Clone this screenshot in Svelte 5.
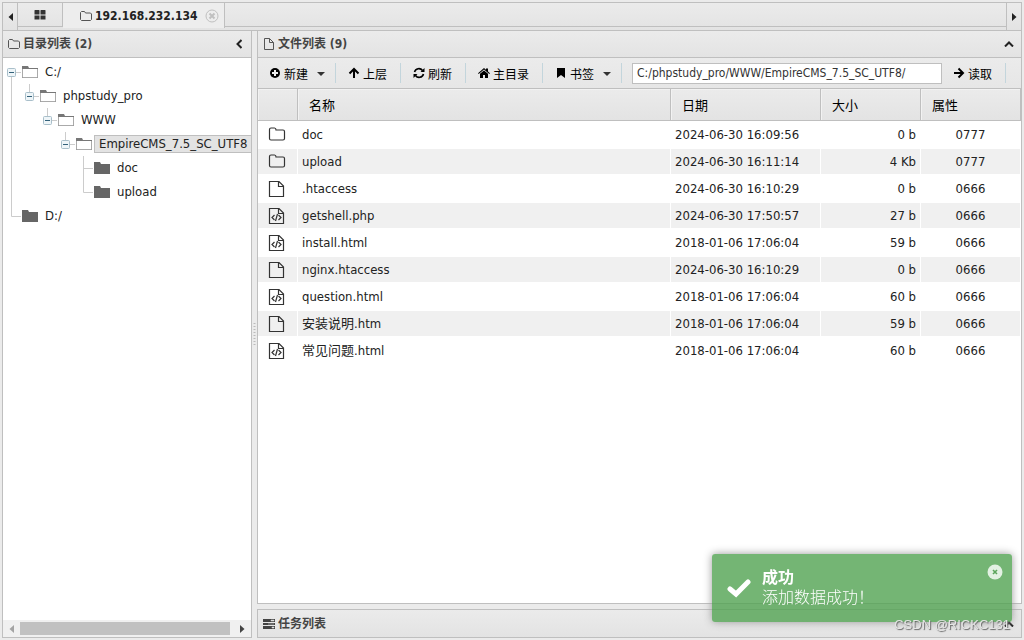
<script lang="ts">
  type Node = { name: string; cells: string[]; open: boolean; active?: boolean }

  const tree: Node[] = [
    { name: 'C:/', cells: ['minus-root'], open: true },
    { name: 'phpstudy_pro', cells: ['line', 'minus'], open: true },
    { name: 'WWW', cells: ['line', '', 'minus'], open: true },
    { name: 'EmpireCMS_7.5_SC_UTF8', cells: ['line', '', '', 'minus'], open: true, active: true },
    { name: 'doc', cells: ['line', '', '', '', 'tee'], open: false },
    { name: 'upload', cells: ['line', '', '', '', 'elbow'], open: false },
    { name: 'D:/', cells: ['elbow'], open: false },
  ]

  const files = [
    { type: 'folder', name: 'doc', date: '2024-06-30 16:09:56', size: '0 b', attr: '0777' },
    { type: 'folder', name: 'upload', date: '2024-06-30 16:11:14', size: '4 Kb', attr: '0777' },
    { type: 'file', name: '.htaccess', date: '2024-06-30 16:10:29', size: '0 b', attr: '0666' },
    { type: 'code', name: 'getshell.php', date: '2024-06-30 17:50:57', size: '27 b', attr: '0666' },
    { type: 'code', name: 'install.html', date: '2018-01-06 17:06:04', size: '59 b', attr: '0666' },
    { type: 'file', name: 'nginx.htaccess', date: '2024-06-30 16:10:29', size: '0 b', attr: '0666' },
    { type: 'code', name: 'question.html', date: '2018-01-06 17:06:04', size: '60 b', attr: '0666' },
    { type: 'file', name: '安装说明.htm', date: '2018-01-06 17:06:04', size: '59 b', attr: '0666' },
    { type: 'code', name: '常见问题.html', date: '2018-01-06 17:06:04', size: '60 b', attr: '0666' },
  ]

  let path = $state('C:/phpstudy_pro/WWW/EmpireCMS_7.5_SC_UTF8/')
  let showToast = $state(true)
</script>

{#snippet folderOutline()}
  <svg width="12" height="12" viewBox="0 0 12 12" fill="none" stroke="#555">
    <path d="M.5 9.5v-7l1-1h3l1 1.500h5l1 1v5.500l-1 1h-9z" />
  </svg>
{/snippet}

{#snippet arrow(dir: string)}
  <svg width="5" height="8" viewBox="0 0 5 8" fill="currentColor">
    <path d={dir === 'left' ? 'M5 0v8L.5 4z' : 'M0 0v8l4.500-4z'} />
  </svg>
{/snippet}

{#snippet caret()}
  <svg class="caret" width="8" height="4" viewBox="0 0 8 4"><path d="M0 0h8L4 4z" fill="#333" /></svg>
{/snippet}

{#snippet chevronUp()}
  <svg width="10" height="6" viewBox="0 0 10 6" fill="none" stroke="#222" stroke-width="2">
    <path d="M1 5.500l4-4 4 4" />
  </svg>
{/snippet}

<div class="app">
  <nav class="tabbar">
    <button class="scroll" aria-label="left">{@render arrow('left')}</button>
    <button class="tab home" aria-label="home">
      <svg width="12" height="10" viewBox="0 0 12 10" fill="#333">
        <path d="M1 0h4q.5 0 .5.5v4H.5v-4Q.5 0 1 0zM7 0h4q.5 0 .5.5v4h-5v-4Q6.500 0 7 0zM.5 5.500h5v4H.5zM6.500 5.500h5v4h-5z" />
      </svg>
    </button>
    <div class="tab active">
      <button class="tab-name">{@render folderOutline()}192.168.232.134</button>
      <button class="close" aria-label="close">
        <svg width="14" height="14" viewBox="0 0 14 14" fill="none" stroke="#c0c0c0">
          <circle cx="7" cy="7" r="6" />
          <path d="M4.500 4.500l5 5M9.500 4.500l-5 5" stroke-width="2" />
        </svg>
      </button>
    </div>
    <div class="tab-rest"></div>
    <button class="scroll right" aria-label="right">{@render arrow('right')}</button>
  </nav>

  <div class="main">
    <aside class="panel left">
      <header class="panel-head">
        {@render folderOutline()}
        <h2>目录列表 (2)</h2>
        <button class="collapse" aria-label="collapse">
          <svg width="6" height="10" viewBox="0 0 6 10" fill="none" stroke="#222" stroke-width="2">
            <path d="M5.500 1l-4 4 4 4" />
          </svg>
        </button>
      </header>
      <div class="tree">
        {#each tree as node}
          <div class="node">
            {#each node.cells as cell}
              <svg class="cell" width="18" height="24" viewBox="0 0 18 24" fill="none" stroke="#ccc">
                {#if cell === 'line'}
                  <path d="M8.500 0v24" />
                {:else if cell === 'tee'}
                  <path d="M8.500 0v24M8.500 12.500H18" />
                {:else if cell === 'elbow'}
                  <path d="M8.500 0v12.500H18" />
                {:else if cell}
                  <path d={cell === 'minus' ? 'M8.500 0v8M13 12.500h5' : 'M8.500 16v8M13 12.500h5'} />
                  <rect x="4.500" y="8.500" width="8" height="8" rx="1" fill="#eef5f8" stroke="#a9bfca" />
                  <path d="M6 12.500h5" stroke="#33617a" />
                {/if}
              </svg>
            {/each}
            <svg class="cell" width="18" height="24" viewBox="0 0 18 24">
              <path d="M1 6h6l1 2h9v10H1z" fill={node.open ? '#777' : '#666'} />
              {#if node.open}
                <path d="M2 9h14v8H2z" fill="#fff" />
                <path d="M1.500 9v8.500h15V9" fill="none" stroke="#aaa" />
              {/if}
            </svg>
            <a href="#{node.name}" class:active={node.active}>{node.name}</a>
          </div>
        {/each}
      </div>
      <div class="scrollbar">
        <span class="dim">{@render arrow('left')}</span>
        <div class="track"><div class="thumb"></div></div>
        <span>{@render arrow('right')}</span>
      </div>
    </aside>

    <div class="splitter">
      <svg width="3" height="24" viewBox="0 0 3 24"><path d="M1.500 0v24" stroke="#bbb" stroke-width="2" stroke-dasharray="1 2" /></svg>
    </div>

    <div class="right-side">
      <section class="panel files">
        <header class="panel-head">
          <svg width="12" height="12" viewBox="0 0 12 12" fill="none" stroke="#555">
            <path d="M1.500.5h5l4 4v7h-9zM6.500.5v4h4" />
          </svg>
          <h2>文件列表 (9)</h2>
          <button class="collapse" aria-label="collapse">{@render chevronUp()}</button>
        </header>

        <div class="toolbar">
          <button>
            <svg class="icon" viewBox="0 0 12 12"><circle cx="6" cy="6" r="5" /><path d="M6 3v6M3 6h6" stroke="#eee" stroke-width="2" /></svg>
            新建{@render caret()}
          </button>
          <button>
            <svg class="icon" viewBox="0 0 12 12"><path d="M6 11V2M1.500 6.500L6 2l4.500 4.500" fill="none" stroke="#000" stroke-width="2" /></svg>
            上层
          </button>
          <button>
            <svg class="icon" viewBox="0 0 12 12">
              <path d="M1.500 5A4.500 4.500 0 0 1 9.500 3.500M10.500 7A4.500 4.500 0 0 1 2.500 8.500" fill="none" stroke="#000" stroke-width="1.600" />
              <path d="M11.500 1v4h-4zM.5 11V7h4z" />
            </svg>
            刷新
          </button>
          <button>
            <svg class="icon" viewBox="0 0 12 12"><path d="M6 3.500l4 3.300V11H7V8H5v3H2V6.800zM0 6.200L6 1l2 1.700V1.500h2v3l2 1.700-.7.8L6 2.600.7 7z" /></svg>
            主目录
          </button>
          <button>
            <svg class="icon" viewBox="0 0 12 12"><path d="M2 1h8v10L6 8l-4 3z" /></svg>
            书签{@render caret()}
          </button>
          <input type="text" aria-label="path" bind:value={path} />
          <button class="read">
            <svg class="icon" viewBox="0 0 12 12"><path d="M1 6h9M5.500 1.500L10 6l-4.500 4.500" fill="none" stroke="#000" stroke-width="2" /></svg>
            读取
          </button>
        </div>

        <table>
          <thead>
            <tr>
              <th class="c-icon"></th>
              <th>名称</th>
              <th class="c-date">日期</th>
              <th class="c-size">大小</th>
              <th class="c-attr">属性</th>
            </tr>
          </thead>
          <tbody>
            {#each files as f}
              <tr>
                <td class="c-icon">
                  {#if f.type === 'folder'}
                    <svg width="18" height="18" viewBox="0 0 18 18" fill="none" stroke="#333" stroke-width="1.200">
                      <path d="M1.500 12.500v-9q0-1.500 1.500-1.500h3.500Q8 2 8 4h7q1.500 0 1.500 1.500v7q0 1.500-1.500 1.500H3q-1.500 0-1.500-1.500z" />
                    </svg>
                  {:else}
                    <svg width="18" height="18" viewBox="0 0 18 18" fill="none" stroke="#333" stroke-width="1.200">
                      <path d="M1.500 1.500h9.500L15.500 6v10.500h-14zM10.500 1.500v5h5" />
                      {#if f.type === 'code'}
                        <path d="M6.500 8L4 10.500 6.500 13M10.500 8l2.500 2.500-2.500 2.500M9.500 7l-2 7" />
                      {/if}
                    </svg>
                  {/if}
                </td>
                <td>{f.name}</td>
                <td class="c-date">{f.date}</td>
                <td class="c-size">{f.size}</td>
                <td class="c-attr">{f.attr}</td>
              </tr>
            {/each}
          </tbody>
        </table>
      </section>

      <section class="panel tasks">
        <header class="panel-head">
          <svg width="12" height="12" viewBox="0 0 12 12" fill="#444">
            <path d="M0 1h12v3H0zM0 5h12v2H0zM0 8h12v3H0z" />
            <path d="M8 2h3v1H8zM5 6h6M9 9h2v1H9z" fill="#ddd" stroke="#ddd" stroke-width=".5" />
          </svg>
          <h2>任务列表</h2>
          <button class="collapse" aria-label="expand">{@render chevronUp()}</button>
        </header>
      </section>
    </div>
  </div>

  {#if showToast}
    <div class="toast" role="status">
      <svg width="24" height="20" viewBox="0 0 24 20" fill="none" stroke="#fff" stroke-width="5" stroke-linecap="round">
        <path d="M3 11l6 5L21 4" />
      </svg>
      <div>
        <strong>成功</strong>
        <p>添加数据成功！</p>
      </div>
      <button aria-label="close" onclick={() => (showToast = false)}>
        <svg width="16" height="16" viewBox="0 0 16 16">
          <circle cx="8" cy="8" r="7.500" fill="#e3f1e3" />
          <path d="M6 6l4 4M10 6l-4 4" stroke="#5da65d" stroke-width="1.600" />
        </svg>
      </button>
    </div>
  {/if}
  <div class="watermark">CSDN @RICKC131</div>
</div>

<style>
  :global(body) {
    margin: 0;
    background: #ebebeb;
  }

  .app {
    box-sizing: border-box;
    height: 100vh;
    padding: 2px;
    display: flex;
    flex-direction: column;
    font-family: Tahoma, "DejaVu Sans Condensed", "Noto Sans CJK SC", sans-serif;
    font-size: 13px;
    color: #222;
  }

  svg {
    flex: none;
    display: block;
  }

  button {
    display: flex;
    align-items: center;
    justify-content: center;
    padding: 0;
    border: 0;
    background: none;
    font: inherit;
    color: inherit;
    cursor: pointer;
  }

  .tabbar {
    display: flex;
    height: 27px;
    border: 1px solid #bfbfbf;
    background: linear-gradient(#ebebeb, #e3e3e3);
  }

  .scroll {
    width: 14px;
    border-right: 1px solid #bfbfbf;
    color: #222;
    box-sizing: content-box;
  }

  .scroll.right {
    border-right: 0;
    border-left: 1px solid #bfbfbf;
  }

  .tab {
    height: 23px;
    border-right: 1px solid #bfbfbf;
  }

  .home {
    width: 45px;
    box-sizing: border-box;
    height: 24px;
    border-bottom: 1px solid #bfbfbf;
  }

  .tab.active {
    display: flex;
    align-items: center;
    gap: 8px;
    padding: 0 5px 0 17px;
    height: 25px;
    background: #ededed;
  }

  .tab-name {
    gap: 3px;
    font-size: 12px;
    font-weight: bold;
  }

  .tab-rest {
    flex: 1;
    height: 23px;
    border-bottom: 1px solid #bfbfbf;
  }

  .main {
    flex: 1;
    min-height: 0;
    display: flex;
  }

  .panel {
    border: 1px solid #bfbfbf;
    background: #fff;
  }

  .left {
    width: 248px;
    border-top: 0;
    display: flex;
    flex-direction: column;
    overflow: hidden;
  }

  .panel-head {
    display: flex;
    align-items: center;
    gap: 3px;
    height: 26px;
    padding: 0 5px;
    border-bottom: 1px solid #bfbfbf;
    background: linear-gradient(#ebebeb, #e3e3e3);
  }

  h2 {
    margin: 0;
    font-size: 12px;
    line-height: 16px;
    font-weight: bold;
    color: #444;
  }

  .collapse {
    width: 14px;
    height: 16px;
    margin-left: auto;
  }

  .tree {
    flex: 1;
    padding-top: 2px;
    overflow: hidden;
  }

  .node {
    display: flex;
    align-items: center;
    height: 24px;
    white-space: nowrap;
  }

  .node a {
    flex: 1 0 auto;
    margin-left: 1px;
    padding: 0 4px;
    border: 1px solid transparent;
    line-height: 16px;
    color: #222;
    text-decoration: none;
  }

  .node a.active {
    border-color: #bfbfbf;
    background: #e3e3e3;
  }

  .scrollbar {
    display: flex;
    align-items: center;
    height: 17px;
    background: #f0f0f0;
    color: #444;
  }

  .scrollbar span {
    width: 17px;
    display: flex;
    justify-content: center;
  }

  .scrollbar .dim {
    color: #a3a3a3;
  }

  .track {
    flex: 1;
  }

  .thumb {
    width: 98%;
    height: 13px;
    background: #c1c1c1;
  }

  .splitter {
    width: 5px;
    display: flex;
    align-items: center;
    justify-content: center;
  }

  .right-side {
    flex: 1;
    min-width: 0;
    display: flex;
    flex-direction: column;
    gap: 5px;
  }

  .files {
    flex: 1;
    border-top: 0;
    min-height: 0;
    overflow: hidden;
  }

  .tasks .panel-head {
    height: 27px;
    border-bottom: 0;
  }

  .toolbar {
    display: flex;
    align-items: center;
    height: 30px;
    border-bottom: 1px solid #bfbfbf;
    background: linear-gradient(#ebebeb, #e6e6e6);
    font-size: 12px;
    color: #000;
  }

  .toolbar button {
    gap: 3px;
    height: 20px;
    padding: 0 13px 0 12px;
    border-right: 1px solid #c3d5dc;
    white-space: nowrap;
  }

  .toolbar button:first-child {
    padding-left: 11px;
  }

  .caret {
    margin: 2px -3px 0 6px;
  }

  .icon {
    width: 12px;
    height: 12px;
  }

  .toolbar input {
    flex: 1;
    min-width: 0;
    height: 21px;
    box-sizing: border-box;
    margin-left: 10px;
    padding: 0 4px;
    border: 1px solid #bfbfbf;
    background: #fff;
    font: inherit;
    color: #333;
  }

  .toolbar .read {
    padding-left: 11px;
    margin-right: 15px;
  }

  table {
    width: 100%;
    table-layout: fixed;
    border-collapse: separate;
    border-spacing: 0;
  }

  th {
    box-sizing: border-box;
    height: 32px;
    padding: 0 11px;
    border-right: 1px solid #bfbfbf;
    border-bottom: 1px solid #bfbfbf;
    background: linear-gradient(#ebebeb, #e3e3e3);
    box-shadow: inset 1px 1px #f2f2f2;
    font-weight: normal;
    text-align: left;
    color: #000;
  }

  td {
    box-sizing: border-box;
    height: 27px;
    padding: 0 4px;
    border: 1px solid #fff;
    border-left: 0;
    line-height: 18px;
  }

  tbody tr:nth-child(even) td {
    background: #f0f0f0;
  }

  .c-icon {
    width: 40px;
  }

  td.c-icon {
    padding-left: 10px;
  }

  .c-date {
    width: 150px;
  }

  .c-size,
  .c-attr {
    width: 100px;
  }

  td.c-size {
    text-align: right;
  }

  td.c-attr {
    text-align: center;
  }

  .toast {
    position: fixed;
    right: 12px;
    bottom: 18px;
    box-sizing: border-box;
    width: 300px;
    height: 68px;
    padding: 0 9px 0 15px;
    display: flex;
    align-items: center;
    gap: 11px;
    border-radius: 3px;
    background: rgba(81, 163, 81, 0.8);
    box-shadow: 0 0 8px #999;
    color: #fff;
    font-size: 16px;
    line-height: 20px;
  }

  .toast p {
    margin: 0;
    font-weight: 300;
  }

  .toast strong {
    display: block;
  }

  .toast button {
    align-self: flex-start;
    margin: 10px 0 0 auto;
  }

  .watermark {
    position: fixed;
    right: 14px;
    bottom: 6px;
    font-family: "Liberation Sans", Arial, sans-serif;
    font-size: 13px;
    line-height: 18px;
    color: #e4e4e4;
    text-shadow: 1px 1px 1px #666;
  }
</style>
